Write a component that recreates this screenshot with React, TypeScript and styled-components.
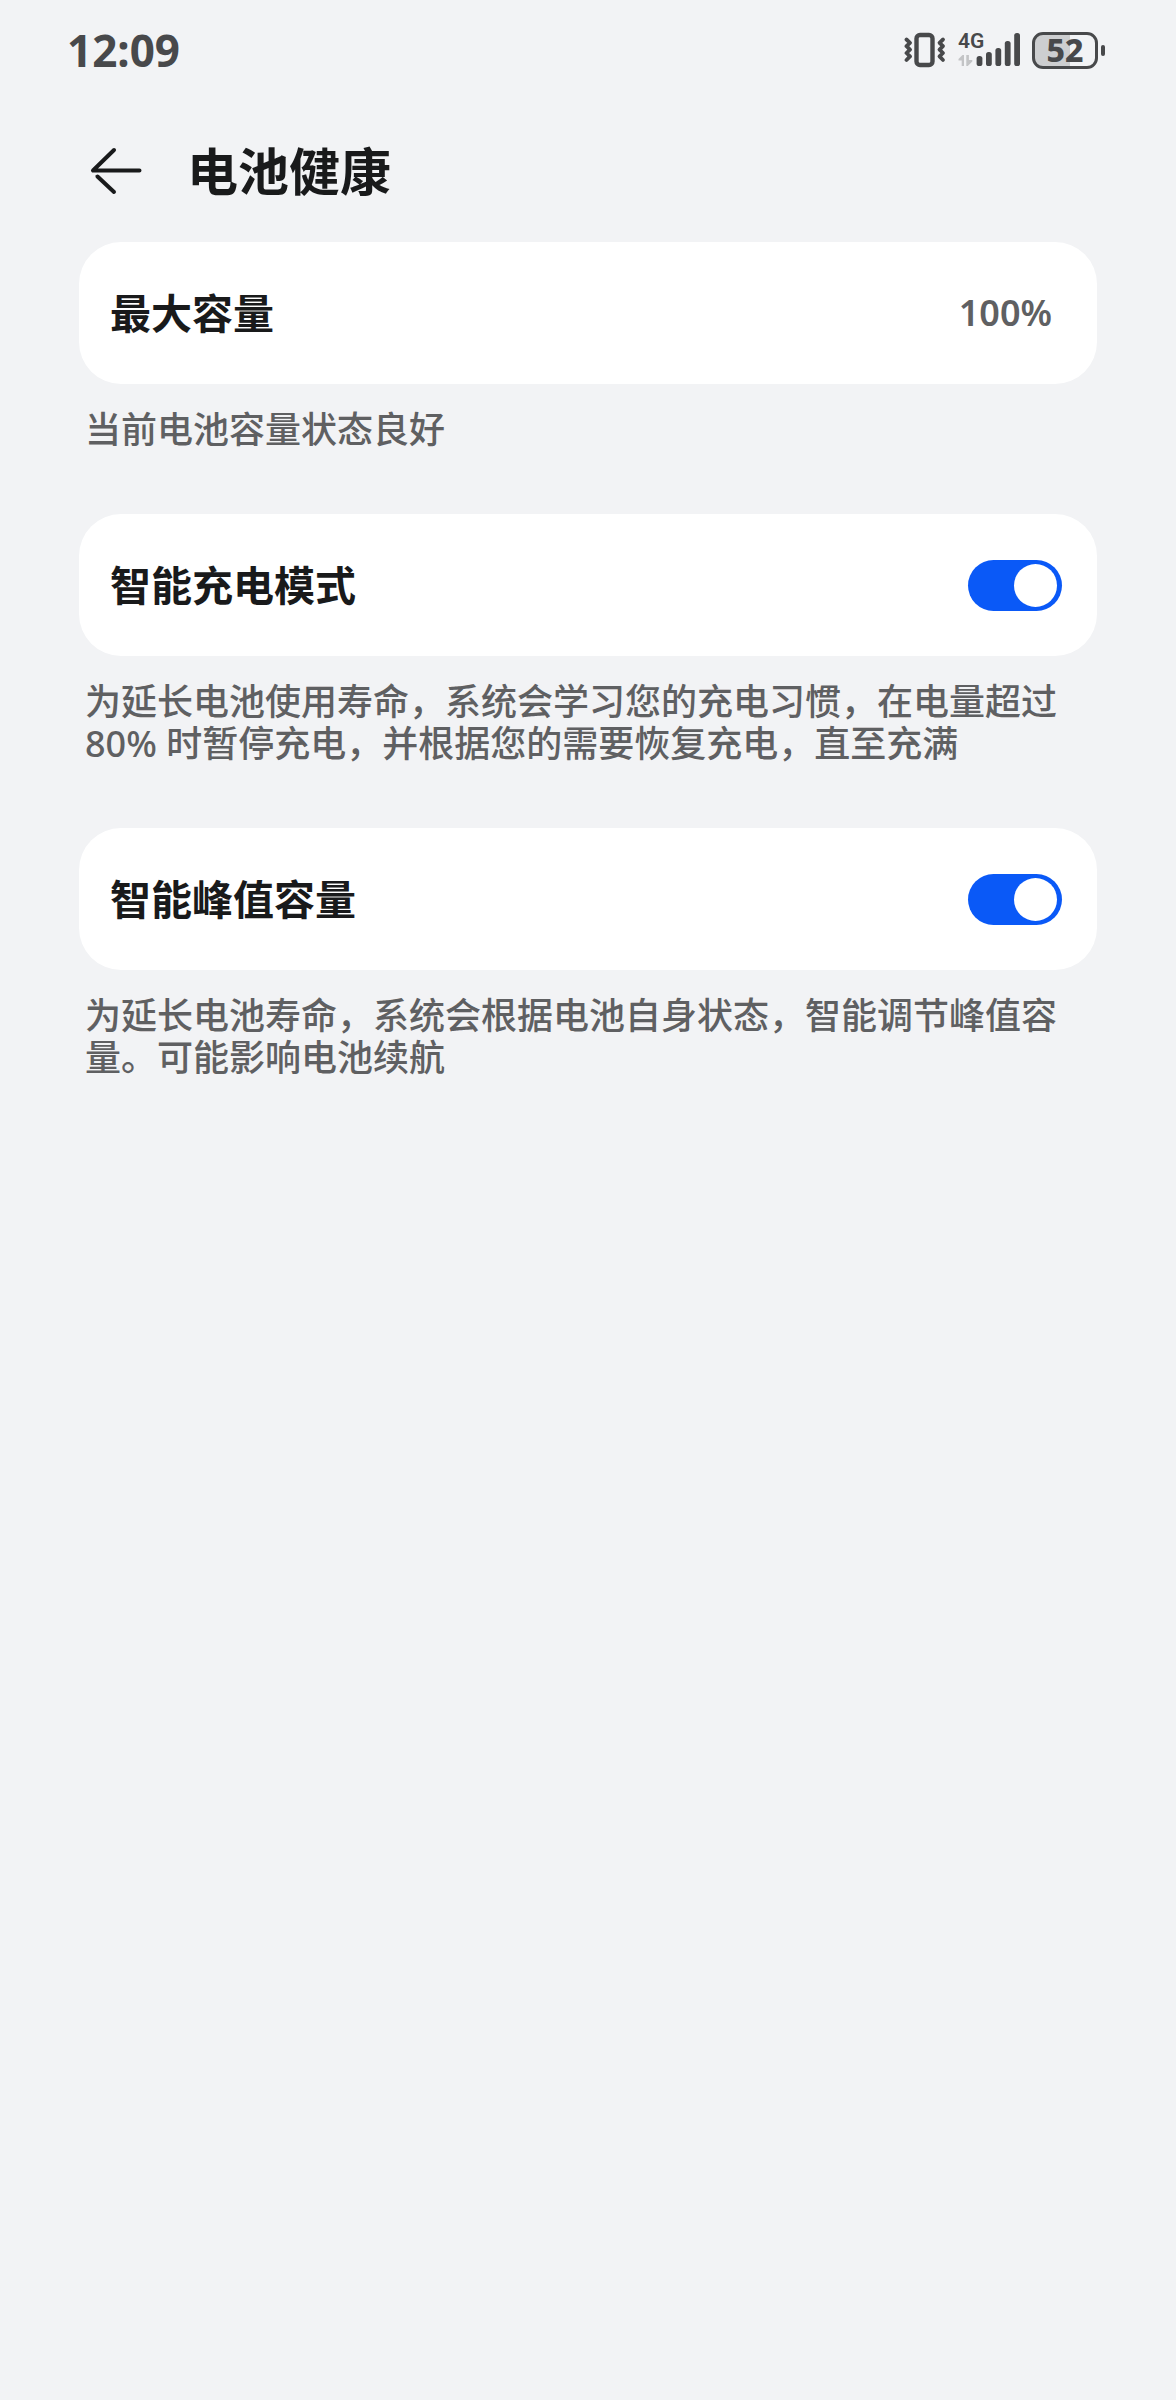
import React, { useState } from 'react';
import styled, { createGlobalStyle } from 'styled-components';

const colors = {
  page: '#f2f3f5',
  card: '#ffffff',
  title: '#191a1b',
  muted: '#5f6062',
  status: '#48494b',
  accent: '#0a59f7',
};

const GlobalStyle = createGlobalStyle`
  *, *::before, *::after { box-sizing: border-box; }
  body {
    margin: 0;
    background: ${colors.page};
    color: ${colors.title};
    font-family: "Noto Sans", "Noto Sans CJK SC", sans-serif;
  }
`;

const Screen = styled.div`
  min-height: 100vh;
  background: ${colors.page};
`;

const StatusBar = styled.div`
  display: flex;
  align-items: center;
  justify-content: space-between;
  height: 100px;
  padding: 0 71px 0 67px;
  color: ${colors.status};
`;

const Clock = styled.time`
  font-size: 44px;
  font-weight: 700;
  line-height: 60px;
`;

const StatusIcons = styled.div`
  display: flex;
  align-items: center;
  gap: 12px;
`;

const Icon = styled.svg`
  display: block;
  flex: none;
`;

const Signal = styled.div`
  position: relative;
`;

const Network = styled.span`
  position: absolute;
  left: 0;
  top: -4px;
  font-family: Roboto, sans-serif;
  font-size: 21px;
  font-weight: 600;
  line-height: 24px;
`;

const Battery = styled.div`
  display: flex;
  align-items: center;
  gap: 3px;
`;

const BatteryBody = styled.div<{ $level: number }>`
  display: flex;
  align-items: center;
  justify-content: center;
  width: 66px;
  height: 37px;
  border: 3px solid ${colors.status};
  border-radius: 11px;
  background: linear-gradient(to right, #cdced0 ${p => p.$level}%, transparent ${p => p.$level}%);
  font-size: 32px;
  font-weight: 800;
  line-height: 32px;
`;

const BatteryTip = styled.div`
  width: 4px;
  height: 11px;
  border-radius: 2px;
  background: ${colors.status};
`;

const Header = styled.header`
  display: flex;
  align-items: center;
  gap: 43px;
  height: 142px;
  padding: 0 90px;
`;

const BackButton = styled.button`
  padding: 0;
  border: 0;
  background: none;
  color: ${colors.title};
  cursor: pointer;
`;

const Title = styled.h1`
  margin: 0;
  font-size: 51px;
  font-weight: 700;
  line-height: 72px;
`;

const Content = styled.main`
  display: flex;
  flex-direction: column;
  gap: 63px;
  padding: 0 79px;
`;

const Section = styled.section`
  display: flex;
  flex-direction: column;
  gap: 25px;
`;

const Card = styled.div`
  display: flex;
  align-items: center;
  justify-content: space-between;
  min-height: 142px;
  padding: 0 35px 0 31px;
  border-radius: 42px;
  background: ${colors.card};
`;

const labelText = `
  font-size: 41px;
  font-weight: 700;
  line-height: 60px;
`;

const CardTitle = styled.span`${labelText}`;
const CardLabel = styled.label`${labelText}`;

const Value = styled.span`
  padding-right: 10px;
  color: ${colors.muted};
  font-size: 36px;
  font-weight: 600;
  line-height: 42px;
`;

const Caption = styled.p`
  margin: 0;
  padding: 0 6px;
  color: ${colors.muted};
  font-size: 36px;
  font-weight: 500;
  line-height: 42px;
`;

const Switch = styled.input`
  appearance: none;
  display: flex;
  align-items: center;
  width: 94px;
  height: 51px;
  margin: 0;
  padding: 0 5px;
  border-radius: 26px;
  background: #d5d6d8;
  cursor: pointer;

  &::before {
    content: "";
    width: 43px;
    height: 43px;
    border-radius: 50%;
    background: #ffffff;
  }

  &:checked {
    justify-content: flex-end;
    background: ${colors.accent};
  }
`;

function VibrateIcon() {
  return (
    <Icon width="42" height="36" viewBox="0 0 42 36" fill="none" stroke="currentColor" aria-hidden="true">
      <rect x="12.500" y="3" width="16" height="30" rx="3.5" strokeWidth="4.400" />
      <path d="M2.500 7.500 6 10.800 2.500 14.200 6 17.600 2.500 21 6 24.400 2.500 28" strokeWidth="3.800" strokeLinecap="round" strokeLinejoin="round" />
      <path d="M39 7.500 35.500 10.800 39 14.200 35.500 17.600 39 21 35.500 24.400 39 28" strokeWidth="3.800" strokeLinecap="round" strokeLinejoin="round" />
    </Icon>
  );
}

function SignalIcon() {
  const tops = [23, 19, 15, 8, 0];
  return (
    <Icon width="62" height="34" viewBox="0 0 62 34" fill="currentColor" aria-hidden="true">
      <path d="M6 22v11H3.700V27.500H0.500V26L4.500 22zM8.300 22v11h1.500l4.500-4.500v-1.400h-3.400V22z" fill="#c3c4c6" />
      {tops.map((top, i) => (
        <rect key={top} x={18.6 + i * 9.4} y={top} width="5.800" height={33 - top} rx="2.600" />
      ))}
    </Icon>
  );
}

function BackIcon() {
  return (
    <Icon width="54" height="50" viewBox="0 0 54 50" fill="none" stroke="currentColor" strokeWidth="4" strokeLinecap="round" aria-hidden="true">
      <path d="M24 4 3 24.500H49.500" strokeLinejoin="round" />
      <path d="M7.500 30.500 24 46" />
    </Icon>
  );
}

type ToggleProps = { id: string; label: string; caption: string };

function ToggleSection({ id, label, caption }: ToggleProps) {
  const [on, setOn] = useState(true);
  return (
    <Section>
      <Card>
        <CardLabel htmlFor={id}>{label}</CardLabel>
        <Switch
          id={id}
          type="checkbox"
          role="switch"
          checked={on}
          onChange={e => setOn(e.target.checked)}
          aria-describedby={`${id}-caption`}
        />
      </Card>
      <Caption id={`${id}-caption`}>{caption}</Caption>
    </Section>
  );
}

export default function App() {
  return (
    <Screen lang="zh-CN">
      <GlobalStyle />
      <StatusBar>
        <Clock>12:09</Clock>
        <StatusIcons>
          <VibrateIcon />
          <Signal>
            <SignalIcon />
            <Network>4G</Network>
          </Signal>
          <Battery>
            <BatteryBody $level={59}>52</BatteryBody>
            <BatteryTip />
          </Battery>
        </StatusIcons>
      </StatusBar>
      <Header>
        <BackButton type="button" aria-label="返回">
          <BackIcon />
        </BackButton>
        <Title>电池健康</Title>
      </Header>
      <Content>
        <Section>
          <Card>
            <CardTitle>最大容量</CardTitle>
            <Value>100%</Value>
          </Card>
          <Caption>当前电池容量状态良好</Caption>
        </Section>
        <ToggleSection
          id="smart-charge"
          label="智能充电模式"
          caption={'为延长电池使用寿命\uFF0C系统会学习您的充电习惯\uFF0C在电量超过 80% 时暂停充电\uFF0C并根据您的需要恢复充电\uFF0C直至充满'}
        />
        <ToggleSection
          id="smart-peak"
          label="智能峰值容量"
          caption={'为延长电池寿命\uFF0C系统会根据电池自身状态\uFF0C智能调节峰值容量。可能影响电池续航'}
        />
      </Content>
    </Screen>
  );
}
